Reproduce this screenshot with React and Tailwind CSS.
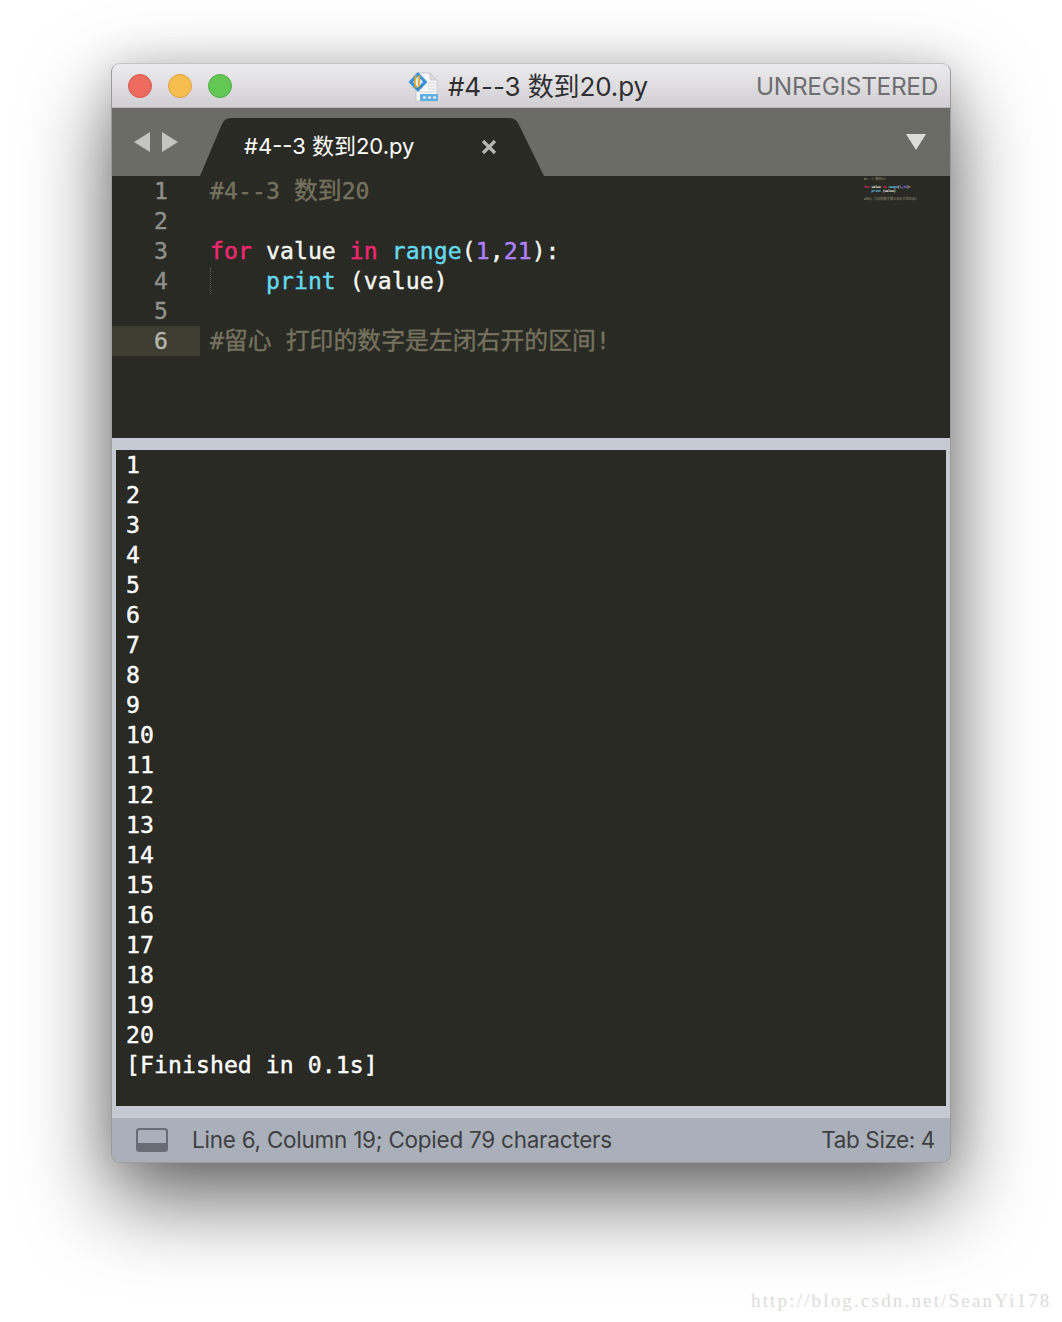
const MONO = "font-['DejaVu_Sans_Mono','Noto_Sans_CJK_SC',monospace]";
const UI = "font-['Inter','Noto_Sans_CJK_SC',sans-serif]";

function C({ c, children }) {
  return <span className={c}>{children}</span>;
}
const cFor = "text-[#f92672]";
const cFn = "text-[#66d9ef]";
const cNum = "text-[#ae81ff]";
const cCom = "text-[#75715e]";
const cjk = "text-[1.03em]";

const code = [
  <C c={cCom}>#4--3 <span className={cjk}>数到</span>20</C>,
  "",
  <><C c={cFor}>for</C> value <C c={cFor}>in</C> <C c={cFn}>range</C>(<C c={cNum}>1</C>,<C c={cNum}>21</C>):</>,
  <>{"    "}<C c={cFn}>print</C> (value)</>,
  "",
  <C c={cCom}>#<span className={cjk}>留心</span> <span className={cjk}>打印的数字是左闭右开的区间</span>!</C>,
];

function FileIcon() {
  return (
    <svg width="32" height="32" viewBox="0 0 32 32" className="shrink-0 -mt-[1px]">
      <path d="M8 2h14l7 7v21H8z" fill="#f6f6f6" stroke="#c8c8c8" strokeWidth="1" />
      <path d="M22 2v7h7z" fill="#dcdcdc" stroke="#bdbdbd" strokeWidth="0.6" />
      <g stroke="#d6d6d6" strokeWidth="1">
        <path d="M20 12h7M20 15h7M20 18h7M11 21h16" />
      </g>
      <rect x="12" y="23" width="18" height="7" fill="#62aee2" />
      <path d="M15 26.500h3M20 26.500h3M25 26.500h3" stroke="#eaf6ff" strokeWidth="2" />
      <path d="M1.500 11 10 2 18.500 11 10 20z" fill="#3f93d8" stroke="#3f93d8" strokeWidth="1.500" strokeLinejoin="round" />
      <path d="M5 11 10 5.500 15 11 10 16.500z" fill="#e4f1fa" />
      <path d="M8.500 4.500c-2.500 3-2.500 10 0 13M12 4.500c-1.500 3-1.500 10 0 13" fill="none" stroke="#dca52a" strokeWidth="1.800" />
      <path d="M7 17c3 1.500 6 0 7-4" fill="none" stroke="#2f7fc4" strokeWidth="1.200" />
    </svg>
  );
}

export default function App() {
  return (
    <div className="relative w-[1062px] h-[1322px] bg-white pt-[63px] pl-[111px] overflow-hidden">
      <div className="w-[840px] h-[1100px] rounded-[9px] overflow-hidden flex flex-col border border-[#9b9b9b] border-t-[#c4c4c4] bg-[#c5c9d2] shadow-[0_36px_85px_rgba(0,0,0,0.6),0_0_40px_rgba(0,0,0,0.12)]">
        {/* title bar */}
        <div className="h-[44px] shrink-0 flex items-center relative bg-gradient-to-b from-[#ecebee] to-[#d1cfd3] border-b border-[#b8b7b8]">
          <div className="flex gap-[16px] pl-[16px]">
            <div className="w-[24px] h-[24px] rounded-full bg-[#ee6b60] border border-[#d9564c]" />
            <div className="w-[24px] h-[24px] rounded-full bg-[#f6be4f] border border-[#dea23b]" />
            <div className="w-[24px] h-[24px] rounded-full bg-[#63c655] border border-[#51ad46]" />
          </div>
          <div className={`absolute left-[296px] top-[5px] flex items-center gap-[8px] ${UI} text-[26px] leading-[36px] text-[#2f2e30] antialiased`}>
            <FileIcon />
            <span className="tracking-[-0.1px]">#4--3 数到20.py</span>
          </div>
          <span className={`ml-auto pr-[12px] ${UI} text-[24.400px] leading-[36px] text-[#6f6e70] tracking-[-0.3px] antialiased`}>UNREGISTERED</span>
        </div>

        {/* tab bar */}
        <div className="h-[68px] shrink-0 bg-[#6b6c66] flex relative">
          <div className="w-[88px] shrink-0 flex items-start pt-[24px] pl-[22px] gap-[12px]">
            <svg width="16" height="20" viewBox="0 0 16 20"><path d="M0 10 16 0v20z" fill="#c4c4c0" /></svg>
            <svg width="16" height="20" viewBox="0 0 16 20"><path d="M16 10 0 0v20z" fill="#c4c4c0" /></svg>
          </div>
          <div className="relative w-[344px] h-[58px] mt-[10px] shrink-0">
            <svg className="absolute inset-0" width="344" height="58" viewBox="0 0 344 58">
              <path d="M0 58 22 6Q24.500 0 31 0H309Q316 0 318.500 6L344 58Z" fill="#292a24" />
            </svg>
            <div className={`relative flex items-center h-[56px] pl-[44px] ${UI} text-[22px] leading-[56px] text-white antialiased`}>
              <span>#4--3 数到20.py</span>
            </div>
            <svg className="absolute left-[281px] top-[21px]" width="16" height="16" viewBox="0 0 16 16">
              <path d="M2 2 14 14M14 2 2 14" stroke="#b5b5b2" strokeWidth="3.200" />
            </svg>
          </div>
          <svg className="ml-auto mr-[24px] mt-[26px]" width="20" height="16" viewBox="0 0 20 16"><path d="M0 0H20L10 16Z" fill="#dcdcda" /></svg>
        </div>

        {/* editor */}
        <div className={`relative h-[262px] shrink-0 bg-[#292a24] ${MONO} text-[23.100px] tracking-[0.08px] leading-[31px] text-[#f8f8f2] whitespace-pre [-webkit-text-stroke:0.4px]`}>
          {code.map((line, i) => (
            <div key={i} className="flex h-[30px]">
              <div className={`w-[88px] shrink-0 text-right pr-[32px] text-[#8f908a] ${i === 5 ? "bg-[#3e3d32] text-[#b5b5ad]" : ""}`}>{i + 1}</div>
              <div className="relative pl-[10px]">
                {i === 3 && <span className="absolute left-[10px] top-[2px] h-[26px] border-l border-dotted border-[#5e5e55]" />}
                {line}
              </div>
            </div>
          ))}
          {/* minimap */}
          <div className="absolute left-[752px] top-[0px] text-[3.100px] tracking-normal leading-[4px] pt-[1px] [-webkit-text-stroke:0.12px]">
            {code.map((line, i) => (
              <div key={i} className="h-[4px]">{line}</div>
            ))}
          </div>
        </div>

        {/* output panel */}
        <div className="mt-[12px] mx-[4px] h-[656px] shrink-0 bg-[#292a24] pl-[10px]">
          <div className={`${MONO} text-[23.100px] tracking-[0.08px] leading-[31px] text-white whitespace-pre [-webkit-text-stroke:0.4px]`}>
            {Array.from({ length: 20 }, (_, i) => (
              <div key={i} className="h-[30px]">{i + 1}</div>
            ))}
            <div className="h-[30px]">[Finished in 0.1s]</div>
          </div>
        </div>

        {/* status bar */}
        <div className={`mt-[12px] flex-1 bg-[#a9b0ba] flex items-center pl-[24px] pr-[15px] ${UI} text-[22.500px] text-[#3f3f42] antialiased`}>
          <svg width="32" height="24" viewBox="0 0 32 24" className="shrink-0">
            <rect x="1" y="1" width="30" height="22" rx="2.500" fill="none" stroke="#696c74" strokeWidth="2" />
            <path d="M1 15H31V20.500Q31 23 28.500 23H3.500Q1 23 1 20.500Z" fill="#696c74" />
          </svg>
          <span className="ml-[24px] tracking-[-0.25px]">Line 6, Column 19; Copied 79 characters</span>
          <span className="ml-auto tracking-[-0.4px]">Tab Size: 4</span>
        </div>
      </div>

      <div className="absolute left-[751px] top-[1289px] font-['Liberation_Serif',serif] text-[19px] leading-[24px] tracking-[2.170px] text-[#dcdcda] whitespace-nowrap">http://blog.csdn.net/SeanYi178</div>
    </div>
  );
}
